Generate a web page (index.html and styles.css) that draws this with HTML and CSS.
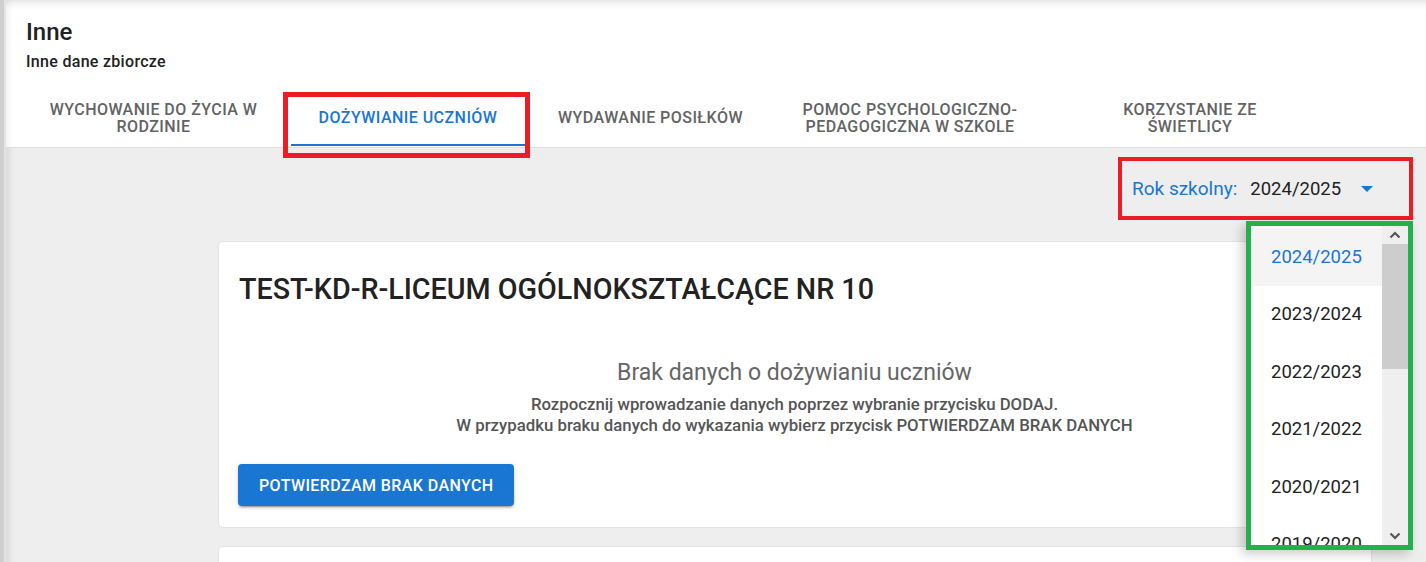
FILE: index.html
```html
<!DOCTYPE html>
<html lang="pl">
<head>
  <meta charset="UTF-8">
  <meta name="viewport" content="width=device-width, initial-scale=1.0">
  <title>Inne dane zbiorcze</title>
  <link rel="stylesheet" href="styles.css">
</head>
<body>
  <div class="app">
    <div class="rail"></div>
    <div class="main">
      <header class="page-head">
        <h1>Inne</h1>
        <p class="subtitle">Inne dane zbiorcze</p>
        <nav class="tabs">
          <a class="tab">Wychowanie do życia w<br>rodzinie</a>
          <a class="tab active">Dożywianie uczniów</a>
          <a class="tab">Wydawanie posiłków</a>
          <a class="tab">Pomoc psychologiczno-<br>pedagogiczna w szkole</a>
          <a class="tab">Korzystanie ze<br>świetlicy</a>
        </nav>
      </header>
      <div class="mark mark-tab"></div>

      <section class="content">
        <div class="toolbar">
          <div class="year-select">
            <span class="year-label">Rok szkolny:</span>
            <span class="year-value">2024/2025</span>
            <svg class="caret" width="12" height="6" viewBox="0 0 12 6"><path d="M0 0h12L6 6z" fill="#1976d2"/></svg>
          </div>
        </div>

        <div class="card">
          <h2 class="card-title">TEST-KD-R-LICEUM OGÓLNOKSZTAŁCĄCE NR 10</h2>
          <div class="empty">
            <h3>Brak danych o dożywianiu uczniów</h3>
            <p>Rozpocznij wprowadzanie danych poprzez wybranie przycisku DODAJ.<br>
              W przypadku braku danych do wykazania wybierz przycisk POTWIERDZAM BRAK DANYCH</p>
          </div>
          <button class="btn-primary">Potwierdzam brak danych</button>
        </div>
        <div class="card card-next"></div>

        <div class="menu">
          <ul class="menu-list">
            <li class="selected">2024/2025</li>
            <li>2023/2024</li>
            <li>2022/2023</li>
            <li>2021/2022</li>
            <li>2020/2021</li>
            <li>2019/2020</li>
          </ul>
          <div class="scrollbar">
            <svg class="arrow" width="12" height="8" viewBox="0 0 12 8"><path d="M1.5 6.5L6 2l4.5 4.5" fill="none" stroke="#555" stroke-width="2.2"/></svg>
            <div class="thumb"></div>
            <div class="track-rest"></div>
            <svg class="arrow" width="12" height="8" viewBox="0 0 12 8"><path d="M1.5 1.5L6 6l4.5-4.5" fill="none" stroke="#555" stroke-width="2.2"/></svg>
          </div>
        </div>
      </section>
    </div>
  </div>
</body>
</html>
```

FILE: styles.css
```css
* {
  box-sizing: border-box;
}
body {
  margin: 0;
  font-family: Roboto, 'Liberation Sans', sans-serif;
  color: #212121;
  background-color: #eeeeee;
  height: 562px;
  overflow: hidden;
}
.app {
  display: flex;
  height: 562px;
}
.rail {
  width: 6px;
  flex: 0 0 6px;
  background: linear-gradient(90deg, #cfcfcf 0, #cfcfcf 4px, #e4e4e4 4px);
}
.main {
  flex: 1;
  position: relative;
  display: flex;
  flex-direction: column;
}

/* header */
.page-head {
  background-color: #fff;
  padding: 16px 20px 0;
  border-bottom: 1px solid #dedede;
  box-shadow: inset 0 9px 9px -7px rgba(0, 0, 0, 0.14), inset 9px 0 9px -8px rgba(0, 0, 0, 0.08);
}
h1 {
  margin: 0;
  font-size: 24px;
  line-height: 32px;
  font-weight: 500;
  color: #212121;
}
.subtitle {
  margin: 4px 0 0;
  font-size: 16px;
  line-height: 20px;
  font-weight: 500;
  letter-spacing: 0.3px;
  color: #212121;
}
.tabs {
  display: grid;
  grid-template-columns: 267px 242px 243px 276px 284px;
  margin: 16px 0 0 -6px;
  height: 59px;
}
.tab {
  position: relative;
  display: flex;
  align-items: center;
  justify-content: center;
  text-align: center;
  font-size: 16px;
  line-height: 17px;
  font-weight: 500;
  letter-spacing: 0.45px;
  text-transform: uppercase;
  color: #636363;
  cursor: pointer;
}
.tab.active {
  color: #1976d2;
}
.tab.active::after {
  content: '';
  position: absolute;
  left: 4px;
  right: 4px;
  bottom: 1px;
  height: 2px;
  background-color: #1976d2;
}

/* annotation frames */
.mark {
  position: absolute;
  border: 5px solid #ed1c24;
  pointer-events: none;
}
.mark-tab {
  left: 277px;
  top: 92px;
  width: 247px;
  height: 66px;
}

/* content */
.content {
  flex: 1;
  position: relative;
  padding: 0 13px 0 213px;
  box-shadow: inset 10px 0 9px -8px rgba(0, 0, 0, 0.12);
}
.toolbar {
  display: flex;
  justify-content: flex-end;
  padding-top: 9px;
}
.year-select {
  display: flex;
  align-items: center;
  width: 295px;
  height: 63px;
  padding: 0 0 0 10px;
  border: 4px solid #ed1c24;
  font-size: 18.5px;
}
.year-label {
  color: #1976d2;
  font-size: 19px;
}
.year-value {
  margin-left: 13px;
  color: #212121;
}
.caret {
  margin-left: 20px;
}

.card {
  width: 1152px;
  margin-top: 22px;
  background-color: #fff;
  border-radius: 4px;
  box-shadow: 0 0 0 1px #e3e3e3;
  padding: 29px 20px 21px 19px;
}
.card-title {
  margin: 0 0 0 1px;
  font-size: 28.7px;
  line-height: 36px;
  font-weight: 500;
  color: #222;
}
.empty {
  text-align: center;
  margin-top: 51px;
}
.empty h3 {
  margin: 0;
  font-size: 23px;
  line-height: 30px;
  font-weight: 400;
  color: #666;
}
.empty p {
  margin: 6px 0 0;
  font-size: 16.8px;
  line-height: 21px;
  font-weight: 500;
  color: #555;
}
.btn-primary {
  margin-top: 28px;
  height: 42px;
  padding: 0 21px;
  border: none;
  border-radius: 4px;
  background-color: #1976d2;
  color: #fff;
  font-family: inherit;
  font-size: 16px;
  font-weight: 500;
  letter-spacing: 0.4px;
  text-transform: uppercase;
  box-shadow: 0 3px 1px -2px rgba(0, 0, 0, 0.2), 0 2px 2px 0 rgba(0, 0, 0, 0.14), 0 1px 5px 0 rgba(0, 0, 0, 0.12);
  cursor: pointer;
}
.card-next {
  margin-top: 20px;
  height: 40px;
  padding: 0;
}

/* year dropdown */
.menu {
  position: absolute;
  top: 73px;
  right: 13px;
  width: 167px;
  height: 329px;
  display: flex;
  border: 5px solid #22b14c;
  background-color: #fff;
  box-shadow: -4px 4px 10px rgba(0, 0, 0, 0.2);
}
.menu-list {
  flex: 1;
  list-style: none;
  margin: 0;
  padding: 2px 0 0;
  overflow: hidden;
}
.menu-list li {
  height: 57.5px;
  display: flex;
  align-items: center;
  padding-left: 20px;
  font-size: 18.5px;
  color: #212121;
}
.menu-list li.selected {
  background-color: #f4f4f4;
  color: #1976d2;
}
.scrollbar {
  width: 26px;
  flex: 0 0 26px;
  display: flex;
  flex-direction: column;
  align-items: center;
  background-color: #efefef;
}
.arrow {
  margin: 5px 0;
}
.thumb {
  width: 100%;
  height: 125px;
  background-color: #cdcdcd;
}
.track-rest {
  flex: 1;
}
```
